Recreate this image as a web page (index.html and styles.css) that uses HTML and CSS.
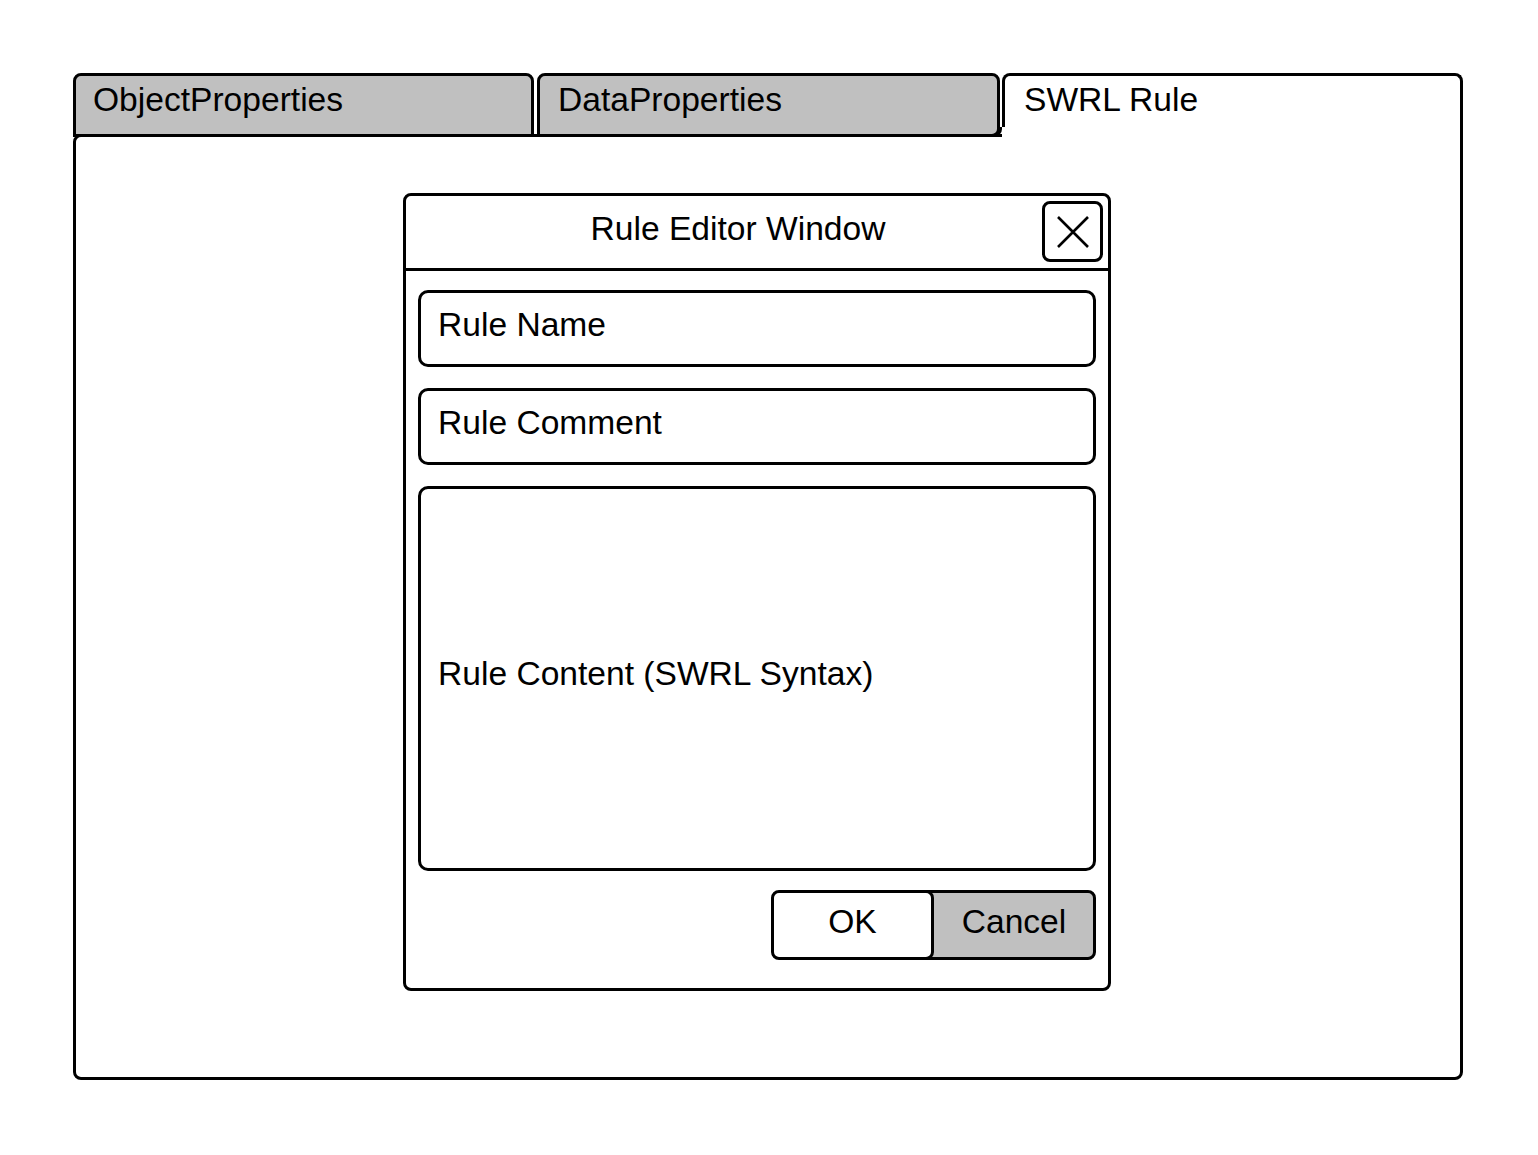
FILE: index.html
```html
<!DOCTYPE html>
<html lang="en">
<head>
<meta charset="utf-8">
<title>Rule Editor</title>
<link rel="stylesheet" href="styles.css">
</head>
<body>
<div class="frame">
  <div class="tabs">
    <div class="tab tab-object">ObjectProperties</div>
    <div class="tab tab-data">DataProperties</div>
    <div class="tab tab-active">SWRL Rule</div>
  </div>
  <div class="panel">
    <div class="dialog">
      <div class="titlebar">
        <div class="title">Rule Editor Window</div>
        <div class="close">
          <svg width="34" height="34" viewBox="0 0 34 34" aria-hidden="true">
            <path d="M2 2 L32 32 M32 2 L2 32" stroke="#000" stroke-width="2.6" fill="none"/>
          </svg>
        </div>
      </div>
      <div class="body">
        <div class="field">Rule Name</div>
        <div class="field">Rule Comment</div>
        <div class="field field-area">Rule Content (SWRL Syntax)</div>
        <div class="actions">
          <div class="btn-group">
            <div class="btn btn-ok">OK</div>
            <div class="btn btn-cancel">Cancel</div>
          </div>
        </div>
      </div>
    </div>
  </div>
</div>
</body>
</html>
```

FILE: styles.css
```css
body {
  margin: 0;
  background: #ffffff;
  font-family: "Liberation Sans", Arial, sans-serif;
  font-size: 33.6px;
  color: #000000;
}

.frame {
  padding: 73px 0 0 73px;
  width: 1390px;
}

.tabs {
  display: flex;
  position: relative;
  z-index: 1;
  height: 64px;
}

.tab {
  box-sizing: border-box;
  height: 64px;
  border: 3px solid #000;
  border-radius: 8px 8px 0 0;
  background: #c0c0c0;
  padding: 5px 0 0 17px;
  line-height: 38px;
  white-space: nowrap;
}

.tab-object {
  width: 461px;
  margin-right: 3px;
}

.tab-data {
  width: 463px;
  margin-right: 2px;
  border-radius: 8px 8px 8px 0;
  padding-left: 18px;
}

.tab-active {
  flex: 1;
  position: relative;
  background: #ffffff;
  border-bottom: none;
  padding-left: 19px;
}

.tab-active::after {
  content: "";
  position: absolute;
  left: -3px;
  bottom: 0;
  width: 3px;
  height: 10px;
  background: #ffffff;
}

.tab-active::before {
  content: "";
  position: absolute;
  z-index: 1;
  left: -12px;
  bottom: 0;
  width: 6px;
  height: 7px;
  border-right: 3px solid #000;
  border-bottom: 3px solid #000;
  border-bottom-right-radius: 8px;
}

.panel {
  box-sizing: border-box;
  margin-top: -3px;
  height: 946px;
  border: 3px solid #000;
  border-radius: 8px 0 8px 8px;
  padding: 56px 0 0 327px;
}

.dialog {
  box-sizing: border-box;
  width: 708px;
  height: 798px;
  border: 3px solid #000;
  border-radius: 8px;
  display: flex;
  flex-direction: column;
}

.titlebar {
  display: flex;
  align-items: flex-start;
  height: 72px;
  border-bottom: 3px solid #000;
}

.title {
  flex: 1;
  text-align: center;
  padding: 14px 0 0 28px;
  line-height: 38px;
}

.close {
  box-sizing: border-box;
  width: 61px;
  height: 61px;
  margin: 5px 5px 0 0;
  border: 3px solid #000;
  border-radius: 8px;
  display: flex;
  align-items: center;
  justify-content: center;
}

.body {
  display: flex;
  flex-direction: column;
  gap: 21px;
  padding: 19px 12px 0 12px;
}

.field {
  box-sizing: border-box;
  height: 77px;
  border: 3px solid #000;
  border-radius: 10px;
  padding: 13px 18px 0 17px;
  line-height: 38px;
}

.field-area {
  height: 385px;
  display: flex;
  align-items: center;
  padding: 0 18px 10px 17px;
}

.actions {
  display: flex;
  justify-content: flex-end;
  margin-top: -2px;
}

.btn-group {
  display: flex;
}

.btn {
  box-sizing: border-box;
  height: 70px;
  border: 3px solid #000;
  display: flex;
  align-items: center;
  justify-content: center;
  padding-bottom: 6px;
  line-height: 38px;
}

.btn-ok {
  width: 163px;
  border-radius: 8px;
  background: #ffffff;
  position: relative;
  z-index: 1;
}

.btn-cancel {
  width: 176px;
  margin-left: -14px;
  padding-left: 12px;
  border-radius: 0 8px 8px 0;
  background: #c0c0c0;
}
```
